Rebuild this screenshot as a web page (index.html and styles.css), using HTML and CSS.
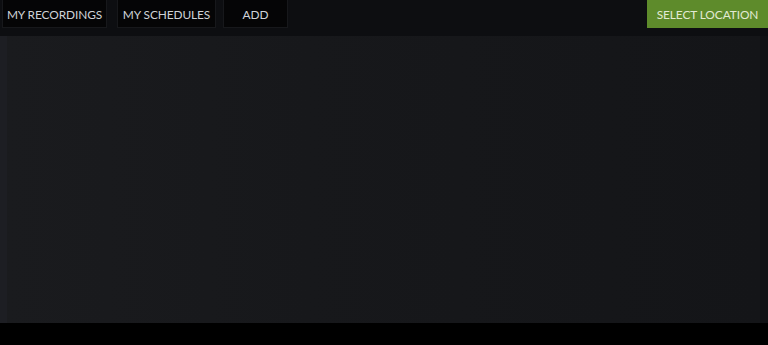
FILE: index.html
```html
<!DOCTYPE html>
<html>
<head>
<meta charset="utf-8">
<link rel="stylesheet" href="styles.css">
</head>
<body>
<div class="app">
  <header class="topbar">
    <nav class="tabs">
      <button class="tab tab-rec">MY RECORDINGS</button>
      <button class="tab tab-sched">MY SCHEDULES</button>
      <button class="tab tab-add">ADD</button>
    </nav>
    <button class="select-loc">SELECT LOCATION</button>
  </header>
  <main class="content">
    <div class="edge-left"></div>
    <div class="panel"></div>
    <div class="edge-right"></div>
  </main>
  <footer class="bottombar"></footer>
</div>
</body>
</html>
```
FILE: styles.css
```css
html, body {
  margin: 0;
  padding: 0;
  width: 768px;
  height: 345px;
  background: #000;
  overflow: hidden;
}
.app {
  display: flex;
  flex-direction: column;
  height: 345px;
  font-family: Lato, "Open Sans", "Liberation Sans", sans-serif;
}
.topbar {
  height: 36px;
  background: #0d0e11;
  display: flex;
  justify-content: space-between;
  align-items: flex-start;
  flex: none;
}
.tabs {
  display: flex;
  padding-left: 2px;
}
.tab {
  height: 28px;
  background: #050506;
  border: 1px solid #17181b;
  border-top: none;
  color: #cfd3d8;
  font-family: inherit;
  font-size: 11.9px;
  letter-spacing: -0.1px;
  white-space: nowrap;
  padding: 1px 0 0;
  margin: 0;
  text-align: center;
}
.tab-rec { width: 105px; }
.tab-sched { width: 99px; margin-left: 10px; }
.tab-add { width: 65px; margin-left: 7px; }
.select-loc {
  height: 28px;
  width: 121px;
  background: #5e8b2b;
  border: none;
  color: #e2ead4;
  font-family: inherit;
  font-size: 11.9px;
  letter-spacing: -0.1px;
  white-space: nowrap;
  padding: 1px 0 0;
  margin: 0;
}
.content {
  flex: 1;
  display: flex;
  background: #17181b;
}
.edge-left {
  width: 7px;
  background: #1d1e23;
}
.panel {
  flex: 1;
  background: linear-gradient(90deg, #1a1b1e 0%, #17181b 40%, #141518 100%);
}
.edge-right {
  width: 8px;
  background: #101114;
}
.bottombar {
  height: 22px;
  background: #000;
  flex: none;
}
```
